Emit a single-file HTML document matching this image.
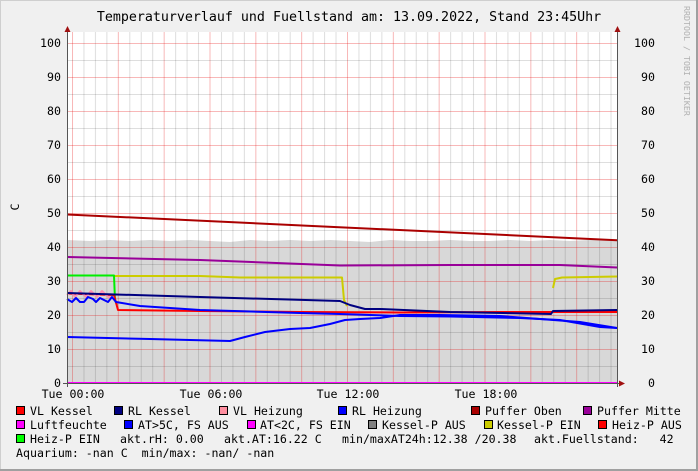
<!DOCTYPE html>
<html><head><meta charset="utf-8"><style>
html,body{margin:0;padding:0;background:#f0f0f0}
svg{display:block}
text{font-family:"DejaVu Sans Mono","Liberation Mono",monospace;white-space:pre}
</style></head><body>
<svg width="698" height="471" viewBox="0 0 698 471" xmlns="http://www.w3.org/2000/svg">
<defs>
<pattern id="vg" x="72" y="0" width="45.833" height="471" patternUnits="userSpaceOnUse">
<line x1="0.5" y1="0" x2="0.5" y2="471" stroke="rgba(230,0,0,0.28)" stroke-width="1"/>
<line x1="11.96" y1="0" x2="11.96" y2="471" stroke="rgba(0,0,0,0.13)" stroke-width="1"/>
<line x1="23.42" y1="0" x2="23.42" y2="471" stroke="rgba(0,0,0,0.13)" stroke-width="1"/>
<line x1="34.87" y1="0" x2="34.87" y2="471" stroke="rgba(0,0,0,0.13)" stroke-width="1"/>
</pattern>
<pattern id="hg" x="0" y="9" width="698" height="34" patternUnits="userSpaceOnUse">
<line x1="0" y1="0.5" x2="698" y2="0.5" stroke="rgba(230,0,0,0.28)" stroke-width="1"/>
<line x1="0" y1="17.5" x2="698" y2="17.5" stroke="rgba(0,0,0,0.13)" stroke-width="1"/>
</pattern>
</defs>
<rect x="0" y="0" width="698" height="471" fill="#f0f0f0"/>
<rect x="0.5" y="0.5" width="697" height="470" fill="none" stroke="#cfcfcf"/>
<line x1="697" y1="0" x2="697" y2="471" stroke="#a0a0a0" stroke-width="2"/>
<line x1="0" y1="470" x2="698" y2="470" stroke="#a0a0a0" stroke-width="2"/>
<text x="349" y="21" font-size="13.3" text-anchor="middle" fill="#000">Temperaturverlauf und Fuellstand am: 13.09.2022, Stand 23:45Uhr</text>
<text transform="translate(684,6) rotate(90)" font-size="8.3" fill="#b0b0b0">RRDTOOL / TOBI OETIKER</text>
<rect x="67" y="32" width="550" height="351" fill="#fff"/>
<polygon fill="#d8d8d8" points="67,383 67,240 90,241 110,240 130,241 150,240 170,241 190,240 210,241 230,242 250,240 270,241 290,240 310,241 330,240 350,241 370,242 390,240 410,241 430,241 450,240 470,241 490,241 510,240 530,241 550,240 570,241 590,240 617,240 617,383"/>
<rect x="67" y="32" width="550" height="351" fill="url(#vg)"/>
<rect x="67" y="32" width="550" height="351" fill="url(#hg)"/>
<g fill="none" stroke-width="2" stroke-linejoin="round">
<polyline stroke="#aa0000" points="67,214.5 617,240.2"/>
<polyline stroke="#990099" points="67,257 200,260 340,265.5 450,265 560,265 617,267.5"/>
<polyline stroke="#cccc00" points="114,276 200,276 240,277.5 340,277.5 342,277.5 344,300 347,306"/>
<polyline stroke="#cccc00" points="553,288 555,279 562,277.5 617,276.5"/>
<polyline stroke="#00ee00" points="67,275.5 114,275.5 115,300 117,305"/>
<polyline stroke="#ff0000" points="67,293.5 114,295 118,310 200,311 300,312 400,312.5 500,312 617,312"/>
<polyline stroke="#ff8fb0" points="67,295 71,291 75,297 80,291 86,297 91,291 97,297 102,291 108,297 114,298"/>
<polyline stroke="#0000ff" points="67,299 72,302 76,298 80,302 84,302 88,297 93,299 96,302 100,298 104,300 108,302 112,297 116,302 140,306 200,310 300,313 340,314 400,316 450,316.5 520,318 560,320 600,327 617,328"/>
<polyline stroke="#000080" points="67,293 200,297 340,301 350,305 365,309 380,309 450,312 551,314 553,311 617,310"/>
<polyline stroke="#0000ff" points="67,337 150,339 230,341 245,337 265,332 290,329 310,328 330,324 345,320 360,319 380,318 400,315 440,315 500,316 540,319 580,322 617,328"/>
</g>
<line x1="67" y1="383" x2="617" y2="383" stroke="#ff00ff" stroke-width="2"/>
<line x1="67.5" y1="28" x2="67.5" y2="387" stroke="#555" stroke-width="1"/>
<line x1="617.5" y1="28" x2="617.5" y2="387" stroke="#555" stroke-width="1"/>
<line x1="63" y1="383.5" x2="621" y2="383.5" stroke="#555" stroke-width="1"/>
<polygon points="64.5,32 67.5,26 70.5,32" fill="#a01010"/>
<polygon points="614.5,32 617.5,26 620.5,32" fill="#a01010"/>
<polygon points="619,380.5 625,383.5 619,386.5" fill="#a01010"/>
<g font-size="11.6" fill="#000" text-anchor="end">
<text x="61" y="47">100</text><text x="61" y="81">90</text><text x="61" y="115">80</text><text x="61" y="149">70</text><text x="61" y="183">60</text><text x="61" y="217">50</text><text x="61" y="251">40</text><text x="61" y="285">30</text><text x="61" y="319">20</text><text x="61" y="353">10</text><text x="61" y="387">0</text>
<text x="655" y="47">100</text><text x="655" y="81">90</text><text x="655" y="115">80</text><text x="655" y="149">70</text><text x="655" y="183">60</text><text x="655" y="217">50</text><text x="655" y="251">40</text><text x="655" y="285">30</text><text x="655" y="319">20</text><text x="655" y="353">10</text><text x="655" y="387">0</text>
</g>
<text transform="translate(19,207) rotate(-90)" font-size="11.6" text-anchor="middle">C</text>
<g font-size="11.6" text-anchor="middle">
<text x="73" y="398">Tue 00:00</text><text x="211" y="398">Tue 06:00</text><text x="348" y="398">Tue 12:00</text><text x="486" y="398">Tue 18:00</text>
</g>
<g stroke="#000" stroke-width="1">
<rect x="16.5" y="406.5" width="8" height="8" fill="#ff0000"/>
<rect x="114.5" y="406.5" width="8" height="8" fill="#000080"/>
<rect x="219.5" y="406.5" width="8" height="8" fill="#ff8fa0"/>
<rect x="338.5" y="406.5" width="8" height="8" fill="#0000ff"/>
<rect x="471.5" y="406.5" width="8" height="8" fill="#aa0000"/>
<rect x="583.5" y="406.5" width="8" height="8" fill="#990099"/>
<rect x="16.5" y="420.5" width="8" height="8" fill="#ff00ff"/>
<rect x="124.5" y="420.5" width="8" height="8" fill="#0000ff"/>
<rect x="247.5" y="420.5" width="8" height="8" fill="#ff00ff"/>
<rect x="368.5" y="420.5" width="8" height="8" fill="#808080"/>
<rect x="484.5" y="420.5" width="8" height="8" fill="#cccc00"/>
<rect x="598.5" y="420.5" width="8" height="8" fill="#ff0000"/>
<rect x="16.5" y="434.5" width="8" height="8" fill="#00ff00"/>
</g>
<g font-size="11.6" fill="#000">
<text x="30" y="415">VL Kessel</text>
<text x="128" y="415">RL Kessel</text>
<text x="233" y="415">VL Heizung</text>
<text x="352" y="415">RL Heizung</text>
<text x="485" y="415">Puffer Oben</text>
<text x="597" y="415">Puffer Mitte</text>
<text x="30" y="429">Luftfeuchte</text>
<text x="138" y="429">AT&gt;5C, FS AUS</text>
<text x="260" y="429">AT&lt;2C, FS EIN</text>
<text x="382" y="429">Kessel-P AUS</text>
<text x="497" y="429">Kessel-P EIN</text>
<text x="612" y="429">Heiz-P AUS</text>
<text x="30" y="443">Heiz-P EIN</text>
<text x="120" y="443">akt.rH: 0.00</text>
<text x="224" y="443">akt.AT:16.22 C</text>
<text x="342" y="443">min/maxAT24h:12.38 /20.38</text>
<text x="534" y="443">akt.Fuellstand:   42</text>
<text x="16" y="457">Aquarium: -nan C  min/max: -nan/ -nan</text>
</g>
</svg>
</body></html>
